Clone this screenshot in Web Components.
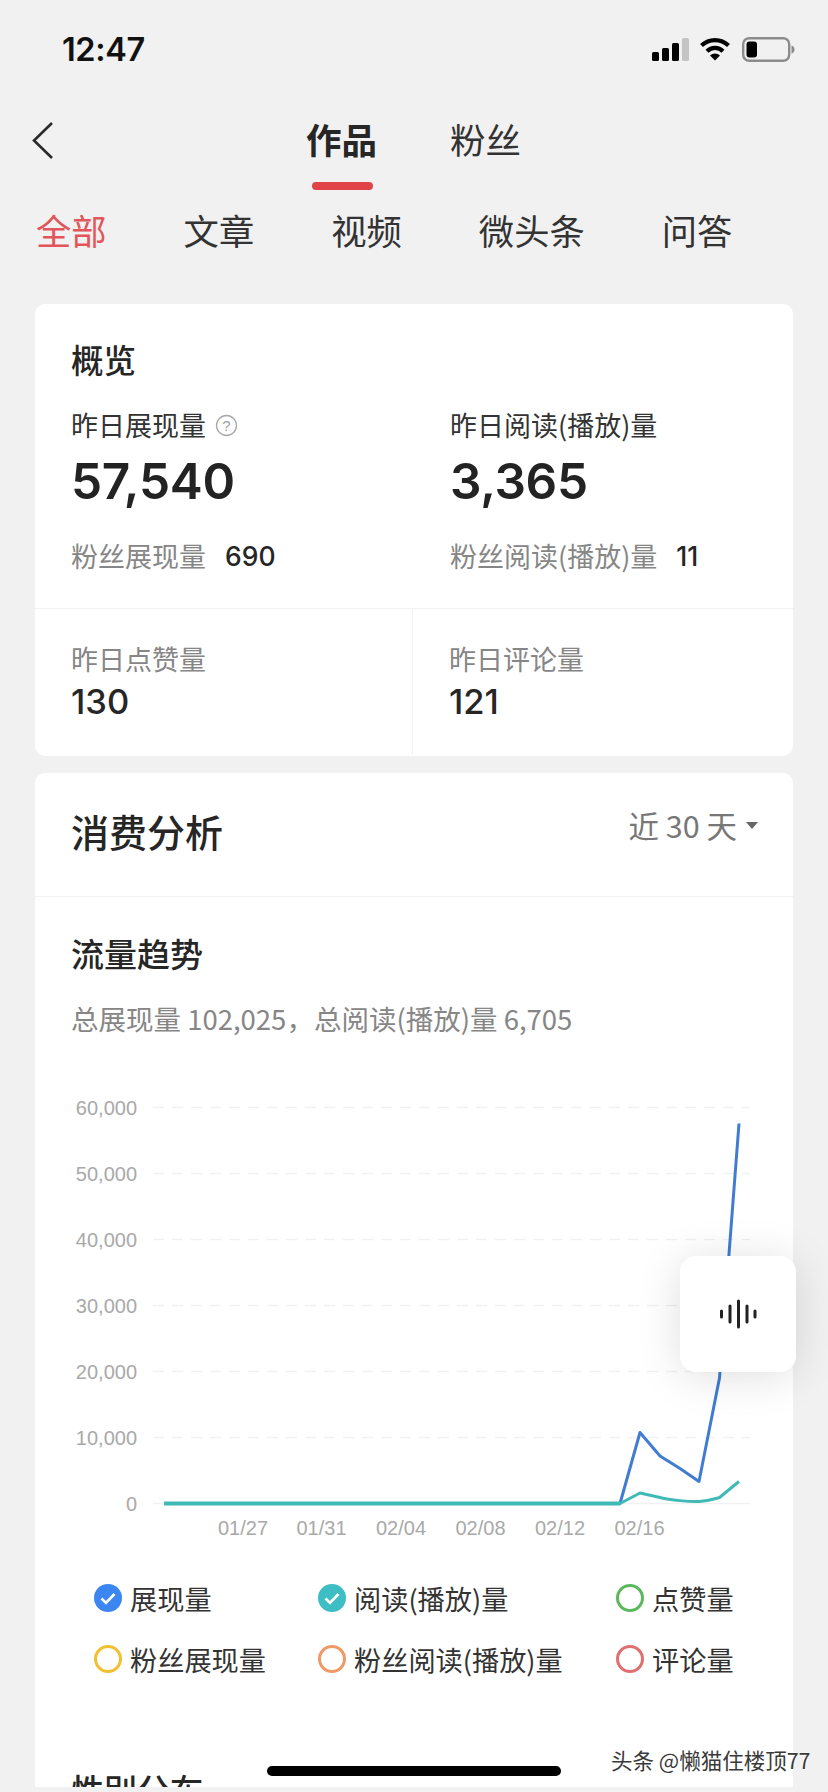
<!DOCTYPE html>
<html lang="zh"><head><meta charset="utf-8"><title>作品</title>
<style>
html,body{margin:0;padding:0;background:#f1f1f1;overflow:hidden}
body{font-family:"Inter","Noto Sans CJK SC",sans-serif;color:#262626}
</style></head><body>
<app-screen>
  <status-bar></status-bar>
  <top-nav></top-nav>
  <filter-tabs></filter-tabs>
  <overview-card></overview-card>
  <analysis-card></analysis-card>
</app-screen>
<script>
const CJK='"Noto Sans CJK SC",sans-serif';
const NUM='"Inter","Noto Sans CJK SC",sans-serif';
function def(name,html){
  customElements.define(name,class extends HTMLElement{
    constructor(){super();const r=this.attachShadow({mode:'open'});r.innerHTML=typeof html==='function'?html(this):html;}
  });
}
def('app-screen',`<style>
:host{display:flex;flex-direction:column;position:relative;width:828px;height:1792px;padding-bottom:5px;box-sizing:border-box;background:#f1f1f1;overflow:hidden}
.float{position:absolute;left:680px;top:1256px;width:116px;height:116px;background:#fff;border-radius:16px;box-shadow:0 4px 44px rgba(0,0,0,.13);display:flex;align-items:center;justify-content:center}
.home{position:absolute;left:267px;top:1766px;width:294px;height:10px;border-radius:5px;background:#000}
.mark{position:absolute;left:611px;top:1746px;font:21.5px/28px ${CJK};color:#3a3a3a;white-space:nowrap;text-shadow:0 0 2px #fff,0 0 2px #fff}
</style><slot></slot>
<div class="float"><svg width="40" height="30" viewBox="0 0 40 30" fill="none" stroke="#222" stroke-width="3" stroke-linecap="round"><path d="M3.5 12v6M12 7v16M20.5 2v26M29 7v16M37 12v6"/></svg></div>
<div class="home"></div>
<div class="mark">头条 @懒猫住楼顶77</div>`);
def('status-bar',`<style>
:host{display:flex;align-items:center;justify-content:space-between;height:98px;padding:0 33px 0 62px;flex:none}
.t{font:600 32.5px/40px ${NUM};color:#111;letter-spacing:-.4px;margin-top:2px}
.i{display:flex;align-items:center;gap:10px}
svg{display:block}
</style><div class="t">12:47</div><div class="i">
<svg width="37" height="23" viewBox="0 0 37 23"><rect x="0" y="14" width="7" height="9" rx="1.5"/><rect x="10" y="10" width="7" height="13" rx="1.5"/><rect x="20" y="5" width="7" height="18" rx="1.5"/><rect x="30" y="0" width="7" height="23" rx="1.5" fill="#c4c4c4"/></svg>
<svg width="32" height="24" viewBox="0 0 32 24" fill="none"><path d="M2.5 8.5A19.5 19.5 0 0 1 29.5 8.5" stroke="#000" stroke-width="4.2"/><path d="M8 14.2A11.5 11.5 0 0 1 24 14.2" stroke="#000" stroke-width="4.2"/><path d="M16 23.5L11 18.6A7.2 7.2 0 0 1 21 18.6Z" fill="#000"/></svg>
<svg width="53" height="25" viewBox="0 0 53 25" style="margin-left:1px"><rect x="1.2" y="1.2" width="46" height="22.6" rx="6" fill="none" stroke="#8c8c8c" stroke-width="2.4"/><rect x="4.5" y="4.5" width="10.5" height="16" rx="3"/><path d="M49.5 8.5c2 .6 3 2 3 4s-1 3.400-3 4z" fill="#8c8c8c"/></svg>
</div>`);
def('top-nav',`<style>
:host{display:flex;align-items:flex-start;height:94px;padding-left:32px;flex:none;font-family:${CJK}}
svg{display:block;margin-top:24px;flex:none}
.tabs{display:flex;gap:73px;margin:11px 0 0 253px}
.tab{font-size:35.500px;line-height:60px;color:#333;width:71px;white-space:nowrap}
.on{font-weight:700;color:#262626}
.bar{width:61px;height:7.500px;border-radius:4px;background:#e04449;margin:13px 0 0 6px}
</style>
<svg width="21" height="37" viewBox="0 0 21 37" fill="none" stroke="#2a2a2a" stroke-width="2.600"><path d="M20 1L2 18.500 20 36"/></svg>
<div class="tabs"><div class="tab on">作品<div class="bar"></div></div><div class="tab">粉丝</div></div>`);
def('filter-tabs',`<style>
:host{display:flex;align-items:center;gap:77px;height:76px;padding-left:36px;flex:none;margin-bottom:36px;font:35.300px/48px ${CJK};color:#333}
.on{color:#e2555a}
</style><span class="on">全部</span><span>文章</span><span>视频</span><span>微头条</span><span>问答</span>`);
def('stat-block',h=>`<style>
:host{display:block}
.l{font:27px/36px ${CJK};color:#333;display:flex;align-items:center;gap:9px;white-space:nowrap;margin-top:25px}
.v{font:600 49.500px/60px ${NUM};color:#232323;margin-top:8px;letter-spacing:-.3px}
.s{font:27px/36px ${CJK};color:#868686;margin-top:27px;white-space:nowrap;display:flex}
.s b{font:500 26.500px/36px ${NUM};color:#262626;margin-left:${h.getAttribute('gap')||19}px}
</style><div class="l">${h.getAttribute('label')}<slot></slot></div><div class="v">${h.getAttribute('value')}</div><div class="s">${h.getAttribute('sub')}<b>${h.getAttribute('subv')}</b></div>`);
def('mini-stat',h=>`<style>
:host{display:block;padding:32px 0 0 36px;height:146px;box-sizing:border-box}
.l{font:27px/36px ${CJK};color:#868686}
.v{font:500 34.500px/40px ${NUM};color:#262626;margin-top:5px}
</style><div class="l">${h.getAttribute('label')}</div><div class="v">${h.getAttribute('value')}</div>`);
def('overview-card',`<style>
:host{display:block;flex:none;margin:0 35px;height:452px;background:#fff;border-radius:10px;overflow:hidden}
.top{height:305px;box-sizing:border-box;padding:34px 0 0 36px;border-bottom:1px solid #f1f1f1}
h2{margin:0 0 2px;font:500 32.500px/42px ${CJK};color:#262626}
.g{display:grid;grid-template-columns:379px 1fr}
.b{display:grid;grid-template-columns:377px 1fr}
mini-stat+mini-stat{border-left:1px solid #f1f1f1}
svg{display:block}
</style>
<div class="top"><h2>概览</h2><div class="g">
<stat-block label="昨日展现量" value="57,540" sub="粉丝展现量" subv="690"><svg width="23" height="23" viewBox="0 0 23 23" fill="none"><circle cx="11.500" cy="11.500" r="10" stroke="#a8a8a8" stroke-width="1.300"/><text x="11.500" y="17" text-anchor="middle" font-size="15" fill="#a0a0a0" font-family="Liberation Sans">?</text></svg></stat-block>
<stat-block label="昨日阅读(播放)量" value="3,365" sub="粉丝阅读(播放)量" subv="11"></stat-block>
</div></div>
<div class="b"><mini-stat label="昨日点赞量" value="130"></mini-stat><mini-stat label="昨日评论量" value="121"></mini-stat></div>`);
def('trend-chart',()=>{
 const ys=[60,50,40,30,20,10,0];
 const Y=v=>1503.5-v*6.6;
 let g='';
 ys.forEach(v=>{const y=Y(v);
  g+=`<line x1="153" x2="750" y1="${y}" y2="${y}" stroke="#f1f1f1" stroke-width="1.500" ${v?'stroke-dasharray="11 8"':''}/>`;
  g+=`<text x="137" y="${y+7}" text-anchor="end" class="a">${v?v+',000':'0'}</text>`;});
 [['01/27',243],['01/31',321.500],['02/04',401],['02/08',480.500],['02/12',560],['02/16',639.500]].forEach(([t,x])=>{g+=`<text x="${x}" y="1535" text-anchor="middle" class="a">${t}</text>`;});
 return `<style>:host{display:block;height:455px}svg{display:block}.a{font:20px "Liberation Sans",sans-serif;fill:#a9a9a9}</style>
 <svg width="758" height="455" viewBox="35 1090 758 455" fill="none">${g}
 <path d="M164 1503.500H620L640 1432.500 660 1456 680 1468.500 699 1481.500 719.500 1378 739 1123.500" stroke="#407cd2" stroke-width="3" stroke-linejoin="round"/>
 <path d="M164 1503.500H620" stroke="#3fbab6" stroke-width="4"/>
 <path d="M620 1503.500L640 1493 660 1497.500C670 1500 690 1502 699 1501.500S712 1499.500 719.500 1497.500L739 1481.500" stroke="#3fbab6" stroke-width="3" stroke-linejoin="round"/>
 </svg>`;});
def('legend-item',h=>{
 const c=h.getAttribute('color'),on=h.hasAttribute('on');
 return `<style>:host{display:flex;align-items:center;gap:8px;font:27.200px/36px ${CJK};color:#333;white-space:nowrap}svg{display:block;flex:none}</style>
 <svg width="28" height="28" viewBox="0 0 28 28" fill="none">${on?`<circle cx="14" cy="14" r="14" fill="${c}"/><path d="M7.500 14.500l4.500 4.500 8.500-9" stroke="#fff" stroke-width="2.600"/>`:`<circle cx="14" cy="14" r="12.500" stroke="${c}" stroke-width="3"/>`}</svg><span>${h.getAttribute('label')}</span>`;});
def('analysis-card',`<style>
:host{display:block;flex:1;min-height:0;margin:17px 35px 0;background:#fff;border-radius:10px 10px 0 0;overflow:hidden;font-family:${CJK}}
.h{display:flex;justify-content:space-between;align-items:flex-start;height:124px;box-sizing:border-box;padding:32px 35px 0 36px;border-bottom:1px solid #f3f3f3}
.h h2{margin:2px 0 0;font:500 38px/48px ${CJK};color:#262626}
.r{font:30.500px/40px ${CJK};color:#777;display:flex;align-items:center;gap:9px;white-space:pre}
.r i{width:0;height:0;border:6.500px solid transparent;border-top:7px solid #666;border-bottom:0}
.b{padding:34px 0 0}
h3{margin:0 0 0 36px;font:500 33px/44px ${CJK};color:#262626}
p{margin:25px 0 54px 36px;font:27.500px/36px ${CJK};color:#868686}
.lg{display:grid;grid-template-columns:224px 298px 1fr;row-gap:25px;padding-left:59px;margin-top:35px}
h3.n{margin-top:90px}
</style>
<div class="h"><h2>消费分析</h2><div class="r">近 30 天<i></i></div></div>
<div class="b"><h3>流量趋势</h3><p>总展现量 102,025，总阅读(播放)量 6,705</p>
<trend-chart></trend-chart>
<div class="lg">
<legend-item label="展现量" color="#3b86f0" on></legend-item><legend-item label="阅读(播放)量" color="#3dbdc4" on></legend-item><legend-item label="点赞量" color="#5cb85c"></legend-item>
<legend-item label="粉丝展现量" color="#f0c030"></legend-item><legend-item label="粉丝阅读(播放)量" color="#ee9966"></legend-item><legend-item label="评论量" color="#e07070"></legend-item>
</div>
<h3 class="n">性别分布</h3></div>`);
</script>
</body></html>
